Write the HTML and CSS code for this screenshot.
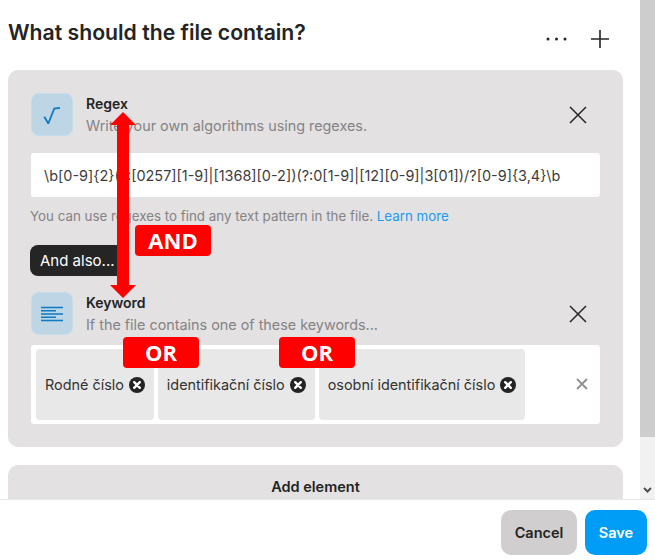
FILE: index.html
```html
<!DOCTYPE html>
<html lang="en">
<head>
<meta charset="utf-8">
<title>What should the file contain?</title>
<link rel="stylesheet" href="styles.css">
</head>
<body>
<div class="app">
  <div class="main">
    <div class="content">
      <header class="head">
        <h1>What should the file contain?</h1>
        <div class="head-actions">
          <svg class="dots" width="21" height="6" viewBox="0 0 21 6"><circle cx="2" cy="3" r="1.500"/><circle cx="10.500" cy="3" r="1.500"/><circle cx="19" cy="3" r="1.500"/></svg>
          <svg class="plus" width="20" height="20" viewBox="0 0 20 20"><path d="M10 1v18M1 10h18"/></svg>
        </div>
      </header>
      <section class="panel">
        <div class="item-head">
          <div class="item-icon">
            <svg class="root" width="18" height="18" viewBox="0 0 18 18"><path d="M1.300 10.800L5.300 17.500L11.300 2.500L17 1.800"/></svg>
          </div>
          <div class="item-text"><div class="item-title">Regex</div><div class="item-desc">Write your own algorithms using regexes.</div></div>
          <svg class="close" width="18" height="18" viewBox="0 0 18 18"><path d="M1 1l16 16M17 1L1 17"/></svg>
        </div>
        <div class="regex-input">\b[0-9]{2}(?:[0257][1-9]|[1368][0-2])(?:0[1-9]|[12][0-9]|3[01])/?[0-9]{3,4}\b</div>
        <p class="help">You can use regexes to find any text pattern in the file. <a href="#">Learn more</a></p>
        <button class="also">And also...</button>
        <div class="item-head second">
          <div class="item-icon">
            <svg width="22" height="16" viewBox="0 0 22 16"><path d="M0 1.400h22M0 4.700h15M0 8h22M0 11.300h15M0 14.600h22"/></svg>
          </div>
          <div class="item-text"><div class="item-title">Keyword</div><div class="item-desc">If the file contains one of these keywords...</div></div>
          <svg class="close" width="18" height="18" viewBox="0 0 18 18"><path d="M1 1l16 16M17 1L1 17"/></svg>
        </div>
        <div class="tags">
          <span class="tag">Rodné číslo <svg class="x" width="16" height="16" viewBox="0 0 16 16"><circle cx="8" cy="8" r="8"/><path d="M5.200 5.200l5.600 5.600M10.800 5.200l-5.600 5.600"/></svg></span>
          <span class="tag">identifikační číslo <svg class="x" width="16" height="16" viewBox="0 0 16 16"><circle cx="8" cy="8" r="8"/><path d="M5.200 5.200l5.600 5.600M10.800 5.200l-5.600 5.600"/></svg></span>
          <span class="tag">osobní identifikační číslo <svg class="x" width="16" height="16" viewBox="0 0 16 16"><circle cx="8" cy="8" r="8"/><path d="M5.200 5.200l5.600 5.600M10.800 5.200l-5.600 5.600"/></svg></span>
          <svg class="clear" width="12" height="12" viewBox="0 0 12 12"><path d="M1 1l10 10M11 1L1 11"/></svg>
        </div>
      </section>
      <section class="add">Add element</section>
    </div>
    <div class="scrollbar">
      <div class="thumb"></div>
      <svg class="arrow" width="9" height="6" viewBox="0 0 9 6"><path d="M1 1l3.500 3.500L8 1"/></svg>
    </div>
  </div>
  <footer class="foot">
    <button class="btn cancel">Cancel</button>
    <button class="btn save">Save</button>
  </footer>
  <svg class="annot-arrow" width="26" height="186" viewBox="0 0 26 186"><path d="M13 0L26 13H19V173H26L13 186L0 173H7V13H0Z"/></svg>
  <span class="badge and">AND</span>
  <span class="badge or1">OR</span>
  <span class="badge or2">OR</span>
</div>
</body>
</html>
```
FILE: styles.css
```css
* { box-sizing: border-box; }
html, body { margin: 0; height: 100%; overflow: hidden; background: #fff; }
body { font-family: Inter, "Liberation Sans", sans-serif; color: #242424; }
.app { position: relative; width: 655px; height: 560px; display: flex; flex-direction: column; }
.main { height: 499px; display: flex; overflow: hidden; }
.content { width: 640px; padding: 0 17px 0 8px; flex: none; }
.head { height: 70px; display: flex; justify-content: space-between; }
h1 { margin: 19px 0 0; font-size: 21.200px; line-height: 26px; font-weight: 600; }
.head-actions { display: flex; align-items: center; gap: 23px; height: 20px; margin: 29px 13px 0 0; }
.dots { fill: #242424; }
.plus { stroke: #242424; stroke-width: 1.600; fill: none; }
.panel { height: 377px; background: #e3e1e2; border-radius: 10px; padding: 23px 23px 0; }
.item-head { display: flex; height: 43px; }
.second { margin-top: 16px; }
.item-icon { width: 42px; height: 43px; background: #bdd5e5; border: 1px solid #c6dcea; border-radius: 8px; display: flex; align-items: center; justify-content: center; flex: none; }
.item-icon svg { stroke: #0e7ac0; stroke-width: 1.500; fill: none; }
.item-icon .root { stroke-width: 1.800; }
.item-text { flex: 1; margin-left: 13px; }
.item-title { font-size: 14px; line-height: 20px; font-weight: 600; margin-top: 1px; color: #242424; }
.item-desc { font-size: 14.360px; line-height: 20px; color: #858385; margin-top: 2px; }
.close { stroke: #242424; stroke-width: 1.500; fill: none; margin: 13px 13px 0 0; flex: none; }
.regex-input { margin-top: 17px; height: 44px; background: #fff; border-radius: 3px; padding: 0 13px; font-size: 14.450px; line-height: 45px; color: #3d3d3d; white-space: nowrap; width: 569px; }
.help { margin: 10px 0 0 -1px; font-size: 13.350px; line-height: 18px; color: #858385; }
.help a { color: #1b9bf0; text-decoration: none; }
.also { display: block; margin: 20px 0 0 -1px; width: 95px; height: 31px; border: 0; border-radius: 8px; background: #252525; color: #fff; font: 15px Inter, sans-serif; padding: 0 0 0 10px; text-align: left; }
.tags { margin-top: 10px; width: 569px; height: 79px; background: #fff; border-radius: 3px; padding: 4px 5px; display: flex; gap: 4px; position: relative; }
.tag { height: 71px; background: #e9e8e9; border-radius: 4px; padding: 0 9px; font-size: 14.400px; line-height: 20px; color: #333; display: flex; align-items: center; gap: 5px; white-space: nowrap; }
.x { flex: none; }
.x circle { fill: #242424; }
.x path { stroke: #fff; stroke-width: 2.400; stroke-linecap: round; fill: none; }
.clear { position: absolute; right: 12px; top: 33px; stroke: #8f8f8f; stroke-width: 1.800; fill: none; }
.add { margin-top: 18px; height: 80px; background: #e3e1e2; border-radius: 10px; text-align: center; font-size: 14.500px; font-weight: 600; line-height: 20px; padding-top: 12px; color: #242424; }
.scrollbar { width: 15px; background: #f1f1f1; position: relative; flex: none; }
.thumb { height: 437px; background: #cdcdcd; }
.arrow { position: absolute; left: 3px; bottom: 6px; stroke: #505050; stroke-width: 2; fill: none; }
.foot { height: 61px; border-top: 1px solid #e8e8e8; display: flex; justify-content: flex-end; gap: 8px; padding: 10px 8px 0 0; }
.btn { height: 45px; border: 0; border-radius: 10px; font: 600 14.500px Inter, sans-serif; }
.cancel { width: 76px; background: #d0cecf; color: #242424; }
.save { width: 62px; background: #009df7; color: #fff; }
.annot-arrow { position: absolute; left: 110px; top: 112px; fill: #ff0000; }
.badge { position: absolute; height: 31px; background: #ff0000; color: #fff; border-radius: 4px; font: 700 22px/31px "Open Sans", sans-serif; text-align: center; width: 76px; }
.and { left: 135px; top: 225px; }
.or1 { left: 123px; top: 337px; }
.or2 { left: 279px; top: 337px; }
```
